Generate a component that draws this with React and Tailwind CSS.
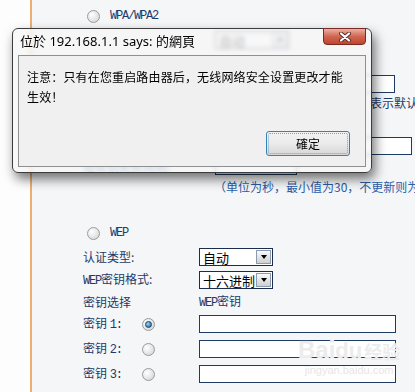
import React from "react";

const cjk = { fontFamily: '"Noto Sans CJK SC", "Noto Sans", sans-serif' };

function L({ children }) {
  return (
    <span className="text-[12px] tracking-[-1.2px]" style={{ fontFamily: '"Liberation Mono", monospace' }}>
      {children}
    </span>
  );
}

function Radio({ checked }) {
  return (
    <div className="w-[13px] h-[13px] rounded-full border border-[#9a9a9a] bg-[radial-gradient(circle_at_35%_35%,#ffffff,#d0d0d0)] flex items-center justify-center shrink-0">
      {checked && (
        <div className="w-[7px] h-[7px] rounded-full bg-[radial-gradient(circle_at_35%_35%,#9ad8f4,#1a5a8c)] border border-[#15426a]" />
      )}
    </div>
  );
}

function Select({ text }) {
  return (
    <div className="flex items-center w-[74px] h-[18px] border border-[#1c2c4c] bg-white pl-[3px] pr-[1px] shrink-0">
      <span className="flex-1 text-[13px] leading-none text-black" style={cjk}>{text}</span>
      <div className="w-[15px] h-[14px] border border-[#8a9ab0] bg-gradient-to-b from-[#fafafa] to-[#d0d0d0] flex items-center justify-center">
        <div className="w-0 h-0 border-l-[3px] border-r-[3px] border-t-[4px] border-l-transparent border-r-transparent border-t-black" />
      </div>
    </div>
  );
}

function Input({ w }) {
  return <div className={`h-[18px] border border-[#1f3a64] bg-white shrink-0 ${w}`} />;
}

export default function App() {
  return (
    <div className="relative w-[415px] h-[392px] overflow-hidden flex bg-[#fdfdfd]" style={cjk}>
      <div className="w-[30px] shrink-0 bg-[#fdfdfd]" />
      <div className="w-[2px] shrink-0 bg-[#eab070]" />
      <div className="flex-1 flex flex-col *:shrink-0 bg-[#f5f6f7] text-[12px] text-[#1d3a6a] leading-none whitespace-nowrap">
        {/* WPA */}
        <div className="mt-[8px] h-[16px] flex items-center pl-[55px] gap-[10px]">
          <Radio />
          <L>WPA/WPA2</L>
        </div>
        <div className="mt-[7px] h-[18px] flex items-center pl-[183px]">
          <div className="w-[60px]"><Select text="自动" /></div>
        </div>
        <div className="mt-[4px] h-[18px]" />
        <div className="mt-[4px] h-[18px] flex items-center pl-[183px]">
          <Input w="w-[180px]" />
        </div>
        <div className="mt-[2px] h-[16px] flex items-center pl-[338px]">
          <span>表示默认值</span>
        </div>
        <div className="mt-[4px] h-[18px]" />
        <div className="mt-[4px] h-[18px] flex items-center pl-[183px]">
          <Input w="w-[197px]" />
        </div>
        <div className="mt-[2px] h-[18px] flex items-center pl-[51px]">
          <span className="w-[132px] text-[#2a5ca8]">组密钥更新周期:</span>
          <Input w="w-[82px]" />
        </div>
        <div className="mt-[5px] h-[14px] flex items-center pl-[182px] text-[#2a5ca8]">
          <span>（单位为秒，最小值为30，不更新则为0）</span>
        </div>

        {/* WEP */}
        <div className="mt-[31px] h-[16px] flex items-center pl-[55px] gap-[10px]">
          <Radio />
          <L>WEP</L>
        </div>
        <div className="mt-[7px] h-[18px] flex items-center pl-[51px]">
          <span className="w-[116px]">认证类型:</span>
          <Select text="自动" />
        </div>
        <div className="mt-[5px] h-[18px] flex items-center pl-[51px]">
          <span className="w-[116px]"><L>WEP</L>密钥格式:</span>
          <Select text="十六进制" />
        </div>
        <div className="mt-[5px] h-[16px] flex items-center pl-[51px]">
          <span className="w-[116px]">密钥选择</span>
          <span><L>WEP</L>密钥</span>
        </div>
        {[1, 2, 3].map((n) => (
          <div key={n} className={`${n === 1 ? "mt-[5px]" : "mt-[7px]"} h-[18px] flex items-center pl-[51px]`}>
            <span className="w-[59px]">密钥 <L>{n}:</L></span>
            <div className="w-[57px]"><Radio checked={n === 1} /></div>
            <Input w="w-[197px]" />
          </div>
        ))}
      </div>

      {/* watermark */}
      <div className="absolute left-[298px] top-[338px] flex flex-col items-center pointer-events-none">
        <div className="flex items-end text-[24px] font-bold leading-none text-[#ececec] [text-shadow:0_0_1px_#ffffff]" style={{ fontFamily: '"Liberation Sans", "Noto Sans CJK SC", sans-serif' }}>
          <span>Bai</span>
          <span className="text-[22px]">du</span>
          <span className="text-[18px] ml-[2px]">经验</span>
        </div>
        <div className="mt-[3px] text-[11px] leading-none text-[#e6e6e6]" style={{ fontFamily: '"Liberation Sans", sans-serif' }}>
          jingyan.baidu.com
        </div>
      </div>

      {/* dialog */}
      <div className="absolute left-[12px] top-[28px] w-[360px] h-[145px] rounded-[6px] border border-[#3c3c3c] bg-[#f6f6f6]/75 backdrop-blur-[2px] shadow-[3px_6px_12px_rgba(0,0,0,0.55)] flex flex-col px-[5px] pb-[5px]">
        <div className="h-[26px] flex items-center pl-[2px] text-[13px] text-black" style={{ fontFamily: '"Noto Sans", "Noto Sans CJK TC", sans-serif' }}>
          位於 192.168.1.1 says: 的網頁
        </div>
        <div className="absolute right-[5px] top-[-1px] w-[43px] h-[17px] rounded-b-[4px] border border-[#7a2a20] bg-gradient-to-b from-[#eab0a2] via-[#d06650] to-[#c0442e] flex items-center justify-center">
          <svg width="14" height="10" viewBox="0 0 14 10">
            <path d="M3 1.5 L11 8.5 M11 1.5 L3 8.5" stroke="#5a2a22" strokeWidth="4" strokeLinecap="round" />
            <path d="M3 1.5 L11 8.5 M11 1.5 L3 8.5" stroke="#ffffff" strokeWidth="2.2" strokeLinecap="round" />
          </svg>
        </div>
        <div className="flex-1 border border-[#8e8f8f] bg-[#f0f0f0] flex flex-col px-[8px] pt-[11px] pb-[10px]" style={cjk}>
          <div className="text-[12px] leading-[20px] text-black tracking-[0.15px]">
            注意：只有在您重启路由器后，无线网络安全设置更改才能<br />生效！
          </div>
          <div className="flex-1" />
          <div className="flex justify-end pr-[7px]">
            <div className="w-[84px] h-[25px] rounded-[3px] border border-[#3c7fb1] bg-gradient-to-b from-[#f2f2f2] via-[#ebebeb] to-[#d6d6d6] p-[1px]">
              <div className="w-full h-full rounded-[2px] border border-dotted border-[#6aa8d0] flex items-center justify-center text-[12px] text-black">
                確定
              </div>
            </div>
          </div>
        </div>
      </div>
    </div>
  );
}
